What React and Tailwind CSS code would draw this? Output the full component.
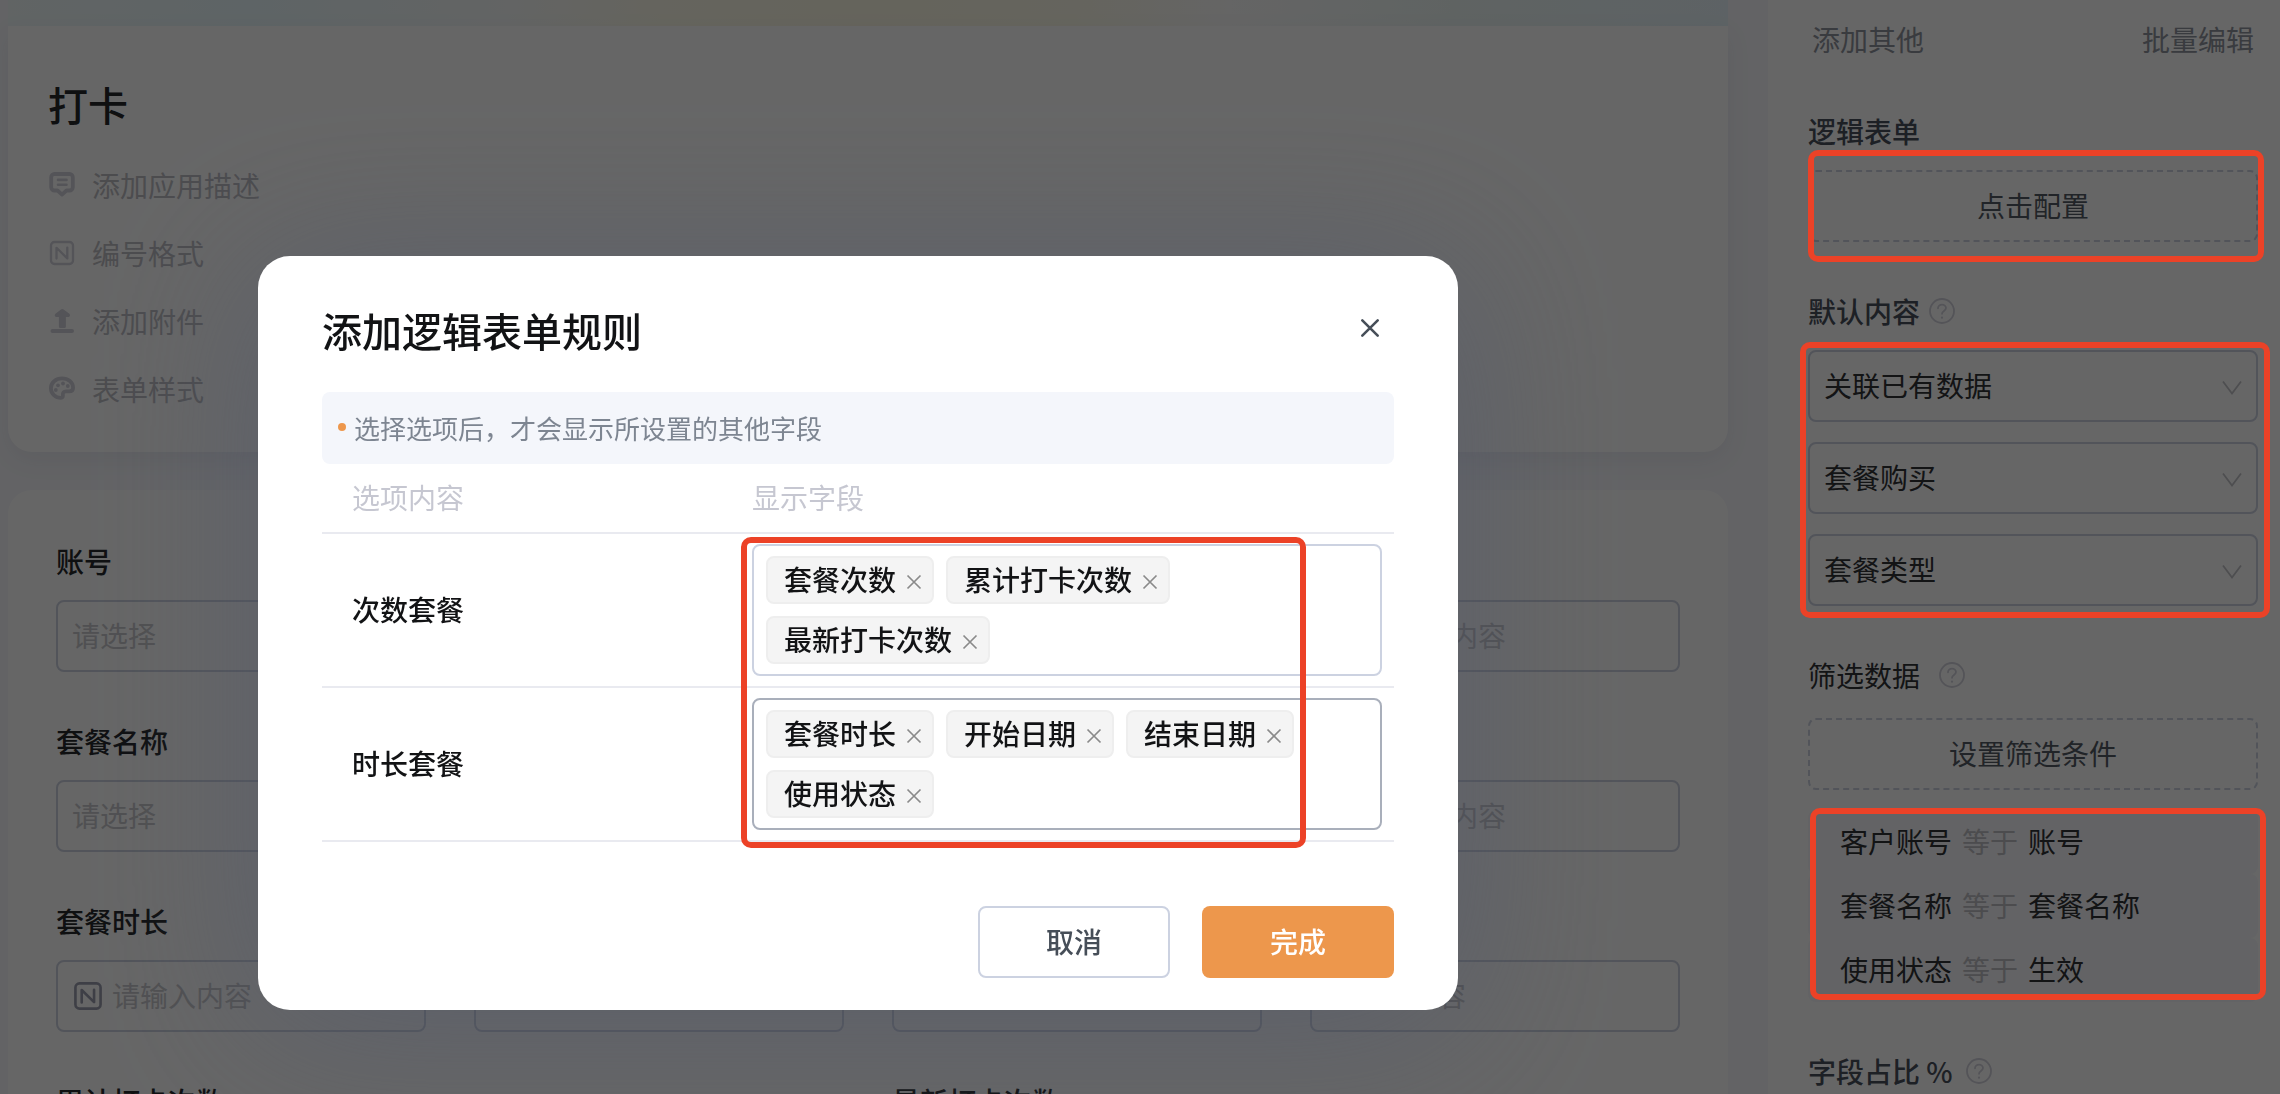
import { useState } from 'react';

const metaItems = [
    { label: '添加应用描述', icon: 'comment' },
    { label: '编号格式', icon: 'number' },
    { label: '添加附件', icon: 'upload' },
    { label: '表单样式', icon: 'palette' },
];

const fields = [
    { id: 'account', label: '账号', kind: 'select' },
    { id: 'f12', kind: 'text' },
    { id: 'f13', kind: 'text' },
    { id: 'f14', kind: 'number', placeholder: '请输入内容' },
    { id: 'plan', label: '套餐名称', kind: 'select' },
    { id: 'f22', kind: 'text' },
    { id: 'f23', kind: 'text' },
    { id: 'f24', kind: 'number', placeholder: '请输入内容' },
    { id: 'duration', label: '套餐时长', kind: 'number', placeholder: '请输入内容' },
    { id: 'f32', kind: 'text' },
    { id: 'f33', kind: 'text' },
    { id: 'f34', kind: 'text', placeholder: '请输入内容' },
    { id: 'total', label: '累计打卡次数', kind: 'number' },
    { id: 'f42', kind: 'text' },
    { id: 'latest', label: '最新打卡次数', kind: 'number' },
    { id: 'f44', kind: 'text' },
];

const conditions = [
    ['客户账号', '账号'],
    ['套餐名称', '套餐名称'],
    ['使用状态', '生效'],
];

function MetaIcon({ name }) {
    if (name === 'comment') {
        return (
            <svg width="28" height="28" viewBox="0 0 28 28" fill="none" stroke="currentColor" strokeWidth="3.8" strokeLinejoin="round" strokeLinecap="round">
                <path d="M6.500 3h15A3.300 3.300 0 0 1 24.800 6.300v9.900a3.300 3.300 0 0 1-3.300 3.300h-3L14 23.600l-4.500-4.100h-3A3.300 3.300 0 0 1 3.200 16.200V6.300A3.300 3.300 0 0 1 6.500 3z" />
                <path d="M10 8.900h8.500M10 13.700h8.500" strokeWidth="2.600" />
            </svg>
        );
    }
    if (name === 'number') {
        return <NumberIcon size={28} />;
    }
    if (name === 'upload') {
        return (
            <svg width="28" height="28" viewBox="0 0 28 28" fill="currentColor">
                <path d="M14.300 2c.5 0 .9.2 1.300.5l5.800 4.300c1 .9.8 3.200-.8 3.200h-2.700v9.400c0 1-.8 1.600-1.800 1.600h-3.400c-1 0-1.800-.6-1.800-1.600V10H8.200c-1.700 0-1.900-2.300-.8-3.200L13 2.500c.4-.3.800-.5 1.300-.5z" />
                <rect x="2.500" y="22" width="23.500" height="4" rx="2" />
            </svg>
        );
    }
    return (
        <svg width="28" height="28" viewBox="0 0 28 28" fill="none" stroke="currentColor" strokeWidth="3.800" strokeLinejoin="round">
            <path d="M14 3.400C7.800 3.400 2.900 7.600 2.900 13.200c0 5.400 4.600 9.600 10.100 9.600 1.700 0 2-1.200 1.900-2.600-.4-2.600 1-3.900 3.200-3.900h3.100c2.300 0 3.900-1.300 3.900-3.600C25.100 7.300 20.200 3.400 14 3.400z" />
            <g fill="currentColor" stroke="none">
                <circle cx="7.800" cy="15" r="1.900" />
                <circle cx="10" cy="10.300" r="1.900" />
                <circle cx="15" cy="8.500" r="1.900" />
                <circle cx="19.800" cy="11" r="1.900" />
            </g>
        </svg>
    );
}

function NumberIcon({ size }) {
    return (
        <svg className="shrink-0" width={size} height={size} viewBox="0 0 28 28" fill="none" stroke="currentColor" strokeWidth="2.300" strokeLinecap="round" strokeLinejoin="round">
            <rect x="3" y="3" width="22" height="22" rx="3.500" />
            <path d="M8.500 19.600V8.800l10.800 10.600V8.600" />
        </svg>
    );
}

function HelpIcon() {
    return (
        <svg className="text-[#d2d2dc]" width="28" height="28" viewBox="0 0 28 28" fill="none" stroke="currentColor" strokeWidth="1.800" strokeLinecap="round">
            <circle cx="14" cy="14" r="12" />
            <path d="M10 11.300c0-2.200 1.800-3.600 4-3.600s4 1.400 4 3.400c0 2.800-4 2.900-4 5.700" />
            <path d="M14 20.500v.2" strokeWidth="2.200" />
        </svg>
    );
}

function Chevron() {
    return (
        <svg className="pointer-events-none absolute right-4 mt-1 text-[#c2c3c8]" width="20" height="16" viewBox="0 0 20 16" fill="none" stroke="currentColor" strokeWidth="1.800">
            <path d="M1 1.500l9 12 9-12" />
        </svg>
    );
}

// Highlight frame, sits above the mask
function Mark({ className }) {
    return <div className={`pointer-events-none absolute z-20 rounded-[10px] border-[6px] border-[#ec4227] ${className}`} />;
}

function Field({ field }) {
    const box = 'h-[72px] w-full rounded-lg border-2 border-[#ccd2e1] bg-white px-3.5';
    return (
        <div className="flex flex-col">
            <label htmlFor={field.id} className="mb-[19px] h-10 leading-10 font-medium text-[#26282c]">{field.label}</label>
            {field.kind === 'select' ? (
                <select id={field.id} className={`${box} appearance-none pb-0.5 text-[#c8c8cc]`}>
                    <option>请选择</option>
                </select>
            ) : (
                <div className={`${box} flex items-center gap-2 text-[#9c9eae]`}>
                    {field.kind === 'number' && <NumberIcon size={32} />}
                    <input id={field.id} placeholder={field.placeholder} className="min-w-0 flex-1 pb-0.5 outline-none placeholder:text-[#c8c8cc]" />
                </div>
            )}
        </div>
    );
}

function SideSelect({ label, value }) {
    return (
        <div className="relative flex items-center">
            <select aria-label={label} className="h-[72px] w-full appearance-none rounded-lg border-2 border-[#ccd2e1] bg-white px-3.5 pb-0.5 text-[#303236]">
                <option>{value}</option>
            </select>
            <Chevron />
        </div>
    );
}

function DashedButton({ children }) {
    return (
        <button type="button" className="h-[72px] w-full rounded-lg border-2 border-dashed border-[#ccd2e1] pb-0.5 text-[#545a64]">
            {children}
        </button>
    );
}

function Sidebar() {
    return (
        <aside className="flex w-[512px] shrink-0 flex-col bg-white pt-[19px] pr-[22px] pl-10">
            <div className="flex justify-between px-1 leading-10 text-[#8f949e]">
                <button type="button">添加其他</button>
                <button type="button">批量编辑</button>
            </div>

            <h3 className="mt-[52px] mb-[19px] leading-10 font-medium text-[#4a515c]">逻辑表单</h3>
            <div className="relative">
                <DashedButton>点击配置</DashedButton>
                <Mark className="-top-5 -right-1.5 -bottom-5 left-0" />
            </div>

            <h3 className="mt-[49px] mb-[19px] flex items-center gap-2 leading-10 font-medium text-[#4a515c]">
                默认内容 <HelpIcon />
            </h3>
            <div className="relative flex flex-col gap-5">
                <SideSelect label="默认内容" value="关联已有数据" />
                <SideSelect label="关联表单" value="套餐购买" />
                <SideSelect label="关联字段" value="套餐类型" />
                <Mark className="-top-2 -right-3 -bottom-3 -left-2" />
            </div>

            <h3 className="mt-[49px] mb-[23px] flex items-center gap-[18px] leading-10 text-[#303236]">
                筛选数据 <HelpIcon />
            </h3>
            <DashedButton>设置筛选条件</DashedButton>
            <div className="relative mt-5">
                <ul>
                    {conditions.map(([field, value]) => (
                        <li key={field} className="flex gap-2.5 rounded-lg bg-[#f7f8fc] px-8 pb-0.5 leading-[62px] text-[#303236]">
                            <span>{field}</span>
                            <span className="text-[#bdbdc4]">等于</span>
                            <span>{value}</span>
                        </li>
                    ))}
                </ul>
                <Mark className="-top-0.5 -right-2 bottom-0.5 left-0.5" />
            </div>

            <h3 className="mt-[49px] flex items-center gap-3 leading-10 font-medium text-[#4a515c]">
                字段占比 % <HelpIcon />
            </h3>
        </aside>
    );
}

function RuleModal() {
    const [rules, setRules] = useState([
        { option: '次数套餐', tags: ['套餐次数', '累计打卡次数', '最新打卡次数'] },
        { option: '时长套餐', tags: ['套餐时长', '开始日期', '结束日期', '使用状态'], active: true },
    ]);

    const removeTag = (option, tag) => {
        setRules(rules.map((r) => (r.option === option ? { ...r, tags: r.tags.filter((t) => t !== tag) } : r)));
    };

    return (
        <div role="dialog" aria-label="添加逻辑表单规则" className="w-[1200px] rounded-[32px] bg-white px-16 pt-[46px] pb-8 shadow-[0_16px_160px_rgba(84,90,108,0.6)]">
            <div className="mb-[34px] flex items-start justify-between">
                <h2 className="text-[40px] leading-[56px] font-medium text-[#121315]">添加逻辑表单规则</h2>
                <button type="button" aria-label="关闭" className="mt-0.5 flex size-12 items-center justify-center text-[#464e58]">
                    <svg width="20" height="20" viewBox="0 0 20 20" fill="none" stroke="currentColor" strokeWidth="2.600" strokeLinecap="round">
                        <path d="M2.300 2.300l15.400 15.400M17.700 2.300L2.300 17.700" />
                    </svg>
                </button>
            </div>

            <div className="flex h-[72px] items-center gap-2 rounded-lg bg-[#f4f6fb] px-4 pb-0.5 text-[26px] text-[#7d8591]">
                <span className="size-2 rounded-full bg-[#ed974c]" />
                选择选项后，才会显示所设置的其他字段
            </div>

            <div className="relative">
                <table className="w-full border-collapse text-left">
                    <thead>
                        <tr className="h-[69px] border-b-2 border-[#e9eaf0] text-[#c6c7d1]">
                            <th className="w-[430px] pb-0.5 pl-[30px] font-normal">选项内容</th>
                            <th className="pb-0.5 font-normal">显示字段</th>
                        </tr>
                    </thead>
                    <tbody>
                        {rules.map((rule) => (
                            <tr key={rule.option} className="border-b-2 border-[#e9eaf0]">
                                <td className="pb-0.5 pl-[30px] font-medium text-[#121315]">{rule.option}</td>
                                <td className="py-2.5 pr-3">
                                    <div className={`flex flex-wrap gap-3 rounded-lg border-2 px-3 py-2.5 ${rule.active ? 'border-[#a9afbb]' : 'border-[#ccd2e1]'}`}>
                                        {rule.tags.map((tag) => (
                                            <span key={tag} className="flex h-12 items-center gap-2 rounded-lg border-2 border-[#eeeeee] bg-[#f4f4f4] pr-2 pb-0.5 pl-4 font-medium text-[#121315]">
                                                {tag}
                                                <button type="button" aria-label={`移除${tag}`} onClick={() => removeTag(rule.option, tag)} className="mt-1.5 flex size-5 items-center justify-center text-[#8a8a8a]">
                                                    <svg width="16" height="16" viewBox="0 0 16 16" fill="none" stroke="currentColor" strokeWidth="1.700">
                                                        <path d="M1.500 1.500l13 13M14.500 1.500l-13 13" />
                                                    </svg>
                                                </button>
                                            </span>
                                        ))}
                                    </div>
                                </td>
                            </tr>
                        ))}
                    </tbody>
                </table>
                <Mark className="top-[73px] right-[88px] -bottom-1.5 left-[419px]" />
            </div>

            <div className="mt-16 flex justify-end gap-8">
                <button type="button" className="h-[72px] w-48 rounded-lg border-2 border-[#ccd2e1] pb-0.5 font-medium text-[#464e58]">取消</button>
                <button type="button" className="h-[72px] w-48 rounded-lg bg-[#ed974c] pb-0.5 font-medium text-white">完成</button>
            </div>
        </div>
    );
}

export default function App() {
    return (
        <div className="flex h-screen overflow-hidden bg-[#f7f8fc] font-['Noto_Sans_CJK_SC',sans-serif] text-[28px]">
            <main className="min-w-0 flex-1 pr-10 pl-2">
                <div className="h-[26px] bg-[linear-gradient(90deg,#f2fafb_0%,#ebfafe_14%,#f7fafa_29%,#fdfbea_38%,#fdf9e6_50%,#fdfbea_62%,#fcfcfc_71%,#eef8f6_84%,#e9f6fc_100%)]" />
                <section className="rounded-b-3xl bg-white px-10 pt-[50px] pb-[43px] shadow-[0_8px_24px_rgba(80,80,110,0.08)]">
                    <h1 className="mb-[33px] text-[40px] leading-[56px] font-medium text-[#26282c]">打卡</h1>
                    <ul className="flex flex-col gap-7">
                        {metaItems.map((item) => (
                            <li key={item.label}>
                                <button type="button" className="flex items-center gap-4 leading-10 text-[#bdbdc4]">
                                    <span className="text-[#d2d2dc]"><MetaIcon name={item.icon} /></span>
                                    {item.label}
                                </button>
                            </li>
                        ))}
                    </ul>
                </section>

                <section className="mt-[38px] grid grid-cols-4 gap-x-12 gap-y-[49px] rounded-3xl bg-white px-12 py-[51px]">
                    {fields.map((field) => (
                        <Field key={field.id} field={field} />
                    ))}
                </section>
            </main>

            <Sidebar />

            <div className="fixed inset-0 z-10 bg-black/60" />
            <div className="fixed inset-0 z-10 flex items-start justify-center pt-64 pr-[564px]">
                <RuleModal />
            </div>
        </div>
    );
}
